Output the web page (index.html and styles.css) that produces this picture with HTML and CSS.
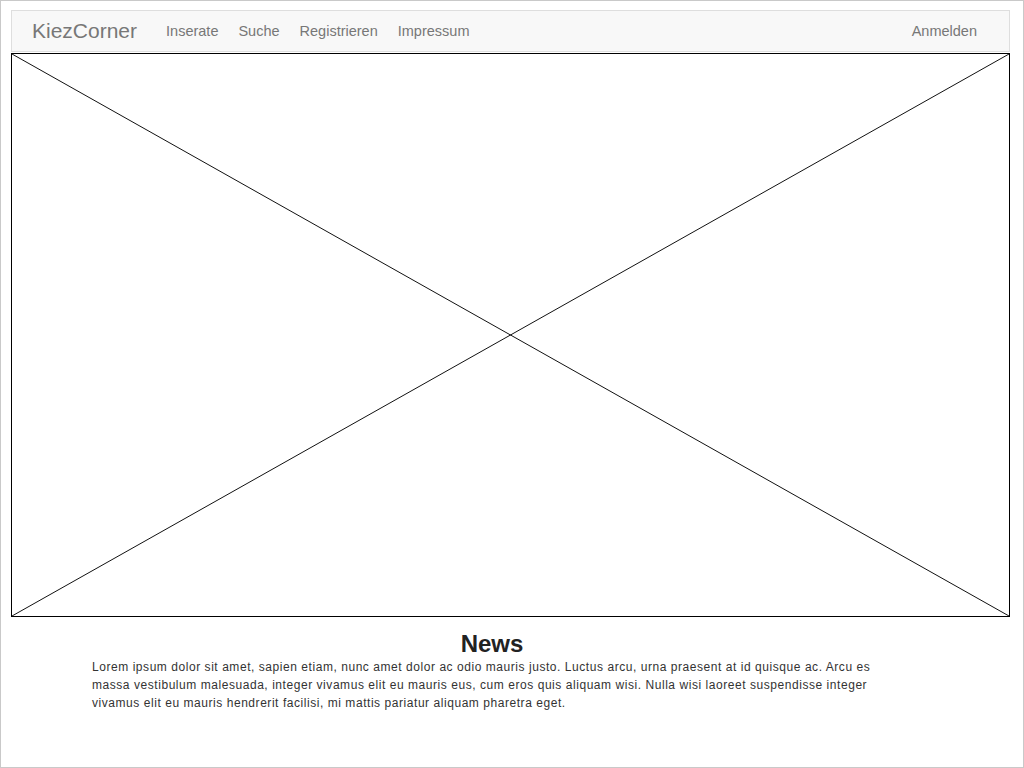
FILE: index.html
```html
<!DOCTYPE html>
<html lang="de">
  <head>
    <meta charset="UTF-8" />
    <meta name="viewport" content="width=device-width, initial-scale=1" />
    <title>KiezCorner</title>
    <link rel="stylesheet" href="styles.css">
  </head>
  <body>
    <div class="page">
      <nav class="navbar">
        <a class="brand" href="#">KiezCorner</a>
        <ul class="nav-links">
          <li><a href="#">Inserate</a></li>
          <li><a href="#">Suche</a></li>
          <li><a href="#">Registrieren</a></li>
          <li><a href="#">Impressum</a></li>
        </ul>
        <a class="login" href="#">Anmelden</a>
      </nav>

      <div class="hero">
        <svg class="placeholder" viewBox="0 0 997 562" preserveAspectRatio="none">
          <line x1="0" y1="0" x2="997" y2="562" />
          <line x1="997" y1="0" x2="0" y2="562" />
        </svg>
      </div>

      <section class="news">
        <h2>News</h2>
        <p>
          Lorem ipsum dolor sit amet, sapien etiam, nunc amet dolor ac odio mauris justo. Luctus arcu, urna praesent at id quisque ac. Arcu es massa vestibulum malesuada, integer vivamus elit eu mauris eus, cum eros quis aliquam wisi. Nulla wisi laoreet suspendisse integer vivamus elit eu mauris hendrerit facilisi, mi mattis pariatur aliquam pharetra eget.
        </p>
      </section>
    </div>
  </body>
</html>
```

FILE: styles.css
```css
body {
  margin: 0;
  font-family: "Liberation Sans", Arial, sans-serif;
  background: white;
}

.page {
  box-sizing: border-box;
  width: 1024px;
  height: 768px;
  padding: 9px 13px 0 10px;
  border: 1px solid #c9c9c9;
}

.navbar {
  display: flex;
  align-items: center;
  height: 40px;
  padding: 0 32px 0 20px;
  background: #f8f8f8;
  border: 1px solid #dedede;
}

.navbar a {
  color: #777;
  text-decoration: none;
}

.brand {
  font-size: 21px;
  margin-right: 29px;
}

.nav-links {
  display: flex;
  gap: 20px;
  margin: 0;
  padding: 0;
  list-style: none;
  font-size: 14.5px;
}

.login {
  margin-left: auto;
  font-size: 14.5px;
}

.hero {
  height: 562px;
  margin-top: 1px;
  border: 1px solid #000;
}

.placeholder {
  display: block;
  width: 100%;
  height: 100%;
}

.placeholder line {
  stroke: #111;
  stroke-width: 1;
}

.news {
  width: 800px;
  margin: 13px 0 0 81px;
  color: #333;
}

.news h2 {
  margin: 0;
  font-size: 24px;
  line-height: 28px;
  text-align: center;
  color: #222;
}

.news p {
  margin: 0;
  font-size: 12px;
  line-height: 18px;
  letter-spacing: 0.55px;
}
```
